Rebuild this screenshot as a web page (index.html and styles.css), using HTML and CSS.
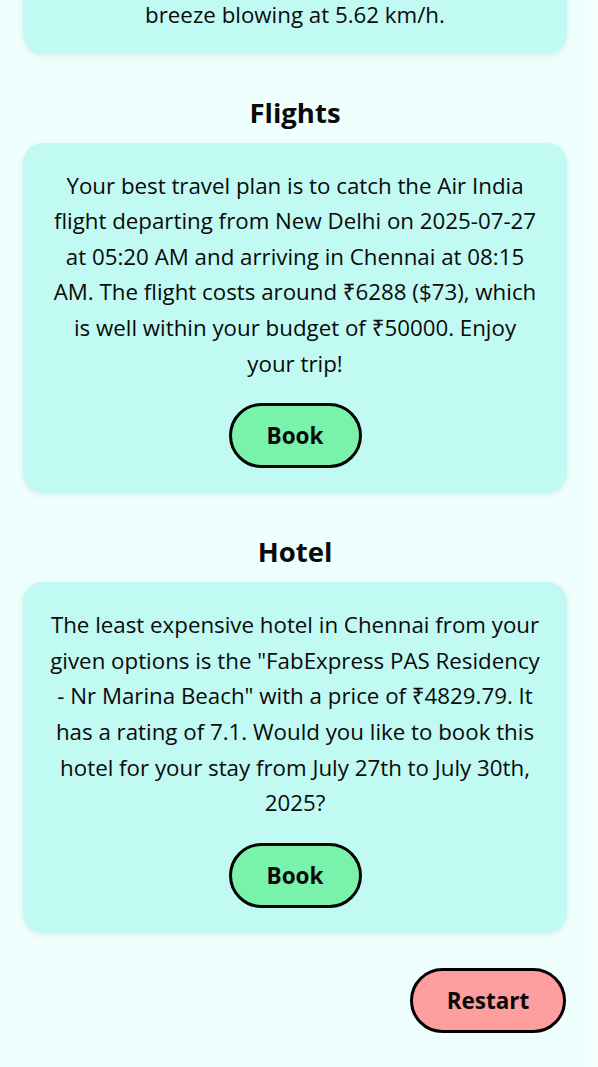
FILE: index.html
```html
<!DOCTYPE html>
<html lang="en">
<head>
<meta charset="utf-8">
<title>Trip Plan</title>
<link rel="stylesheet" href="styles.css">
</head>
<body>
<main class="page">
  <section class="card card-top">
    <p class="card-text">breeze blowing at 5.62 km/h.</p>
  </section>

  <h2 class="section-title">Flights</h2>
  <section class="card">
    <p class="card-text">Your best travel plan is to catch the Air India flight departing from New Delhi on 2025-07-27 at 05:20 AM and arriving in Chennai at 08:15 AM. The flight costs around ₹6288 ($73), which is well within your budget of ₹50000. Enjoy your trip!</p>
    <button class="btn btn-book" type="button">Book</button>
  </section>

  <h2 class="section-title">Hotel</h2>
  <section class="card">
    <p class="card-text">The least expensive hotel in Chennai from your given options is the "FabExpress PAS Residency - Nr Marina Beach" with a price of ₹4829.79. It has a rating of 7.1. Would you like to book this hotel for your stay from July 27th to July 30th, 2025?</p>
    <button class="btn btn-book" type="button">Book</button>
  </section>

  <div class="actions">
    <button class="btn btn-restart" type="button">Restart</button>
  </div>
</main>
</body>
</html>
```

FILE: styles.css
```css
html, body {
  margin: 0;
  padding: 0;
}

body {
  background: #f6fffe;
  font-family: "Open Sans", "Noto Sans", sans-serif;
  color: #0a0a0a;
  overflow: hidden;
}

.page {
  width: 591px;
  min-height: 1067px;
  box-sizing: border-box;
  padding: 0 24px 0 23px;
  background: #effffd;
  display: flex;
  flex-direction: column;
}

.card {
  background: #c1faf2;
  border-radius: 20px;
  box-shadow: 0 2px 6px rgba(0, 0, 0, 0.08);
  padding: 25px 26px 25px;
  display: flex;
  flex-direction: column;
  align-items: center;
}

.card-top {
  margin-top: -27px;
  padding-top: 24px;
  padding-bottom: 21px;
}

.card-text {
  margin: 0;
  font-size: 22.3px;
  line-height: 35.6px;
  text-align: center;
}

.section-title {
  margin: 42px 0 13px;
  font-size: 27.5px;
  line-height: 34px;
  font-weight: 700;
  text-align: center;
}

.btn {
  font-family: "Open Sans", "Noto Sans", sans-serif;
  font-weight: 700;
  font-size: 22.5px;
  color: #0a0a0a;
  height: 65px;
  border: 3px solid #000;
  border-radius: 999px;
  box-sizing: border-box;
  cursor: pointer;
}

.btn-book {
  margin-top: 22px;
  width: 133px;
  background: #79f2ab;
}

.actions {
  display: flex;
  justify-content: flex-end;
  margin-top: 35px;
  padding-right: 1px;
}

.btn-restart {
  width: 156px;
  background: #ff9e9e;
}
```
